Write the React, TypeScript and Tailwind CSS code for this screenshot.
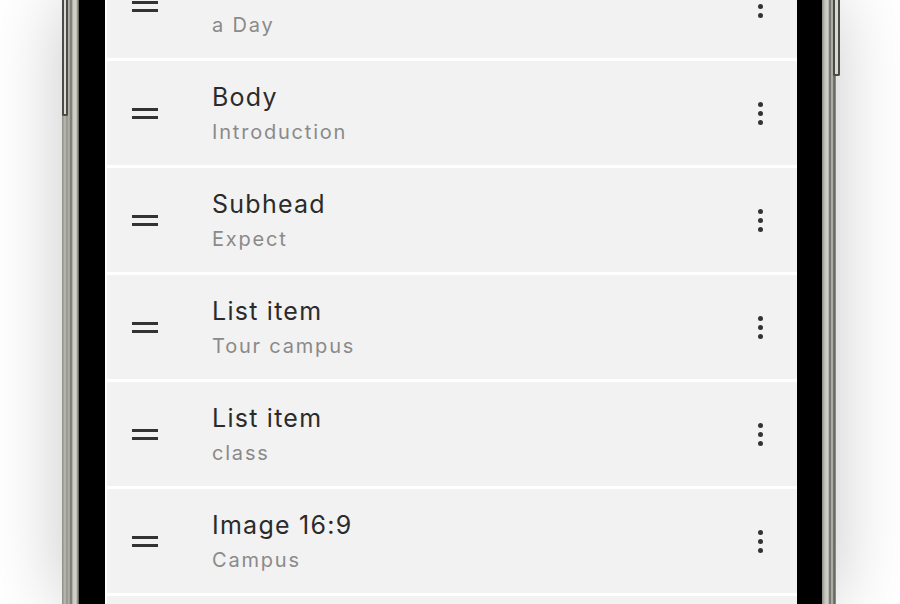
import React from "react";

// first and last rows are cut by the screen edges, so their text sits out of view
const rows = [
  { title: "", sub: "a Day" },
  { title: "Body", sub: "Introduction" },
  { title: "Subhead", sub: "Expect" },
  { title: "List item", sub: "Tour campus" },
  { title: "List item", sub: "class" },
  { title: "Image 16:9", sub: "Campus" },
  { title: "", sub: "" },
];

function DragHandle() {
  return (
    <svg width="26" height="11" viewBox="0 0 26 11" className="shrink-0">
      <rect x="0" y="0" width="26" height="3" fill="#333333" />
      <rect x="0" y="8" width="26" height="3" fill="#333333" />
    </svg>
  );
}

function Kebab() {
  return (
    <div className="flex flex-col items-center gap-[4px]">
      <span className="w-[5px] h-[5px] rounded-full bg-[#333333]" />
      <span className="w-[5px] h-[5px] rounded-full bg-[#333333]" />
      <span className="w-[5px] h-[5px] rounded-full bg-[#333333]" />
    </div>
  );
}

export default function App() {
  return (
    <main
      className="relative w-[900px] h-[604px] overflow-hidden bg-white"
      style={{ fontFamily: "Inter, 'Noto Sans', sans-serif" }}
    >
      <div className="relative ml-[62px] w-[774px] h-full flex shadow-[0_0_70px_rgba(0,0,0,0.22)]">
        {/* left metal edge */}
        <div className="w-[17px] h-full bg-[linear-gradient(to_right,#8a8a84_0px,#bdbdb5_3px,#8f8f88_5px,#b9b9b1_7px,#6a6a64_9px,#c9c9c1_11px,#d3d3cb_14px,#55554f_17px)]" />
        {/* side buttons */}
        <div className="absolute left-0 top-0 w-[6px] h-[116px] rounded-b-[2px] border-x-2 border-b-2 border-[#4a4a46] bg-[#d9d9d3]" />
        <div className="w-[26px] h-full bg-black" />
        {/* screen */}
        <div className="flex-1 h-full bg-white pl-[2px]">
          <div className="-mt-[46px] flex flex-col gap-[3px]">
            {rows.map((r, i) => (
              <div key={i} className="h-[104px] bg-[#f2f2f2] flex items-center">
                <div className="w-[25px]" />
                <DragHandle />
                <div className="ml-[54px] flex-1 flex flex-col pt-[3px]">
                  <span className="h-[32px] text-[25px] leading-[32px] text-[#2b2b2b] tracking-[0.05em]">{r.title}</span>
                  <span className="mt-[2px] h-[34px] text-[20px] leading-[34px] text-[#8a8a8a] tracking-[0.09em]">{r.sub}</span>
                </div>
                <div className="mr-[34px]">
                  <Kebab />
                </div>
              </div>
            ))}
          </div>
        </div>
        <div className="w-[25px] h-full bg-black" />
        {/* right metal edge */}
        <div className="w-[14px] h-full bg-[linear-gradient(to_right,#8e8e88_0px,#c4c4bc_3px,#d2d2ca_6px,#5f5f59_8px,#c6c6be_10px,#5a5a54_12px,#9a9a94_14px)]" />
        <div className="absolute right-[-4px] top-0 w-[7px] h-[76px] rounded-b-[2px] border-x-2 border-b-2 border-[#4a4a46] bg-[#d9d9d3]" />
      </div>
    </main>
  );
}
